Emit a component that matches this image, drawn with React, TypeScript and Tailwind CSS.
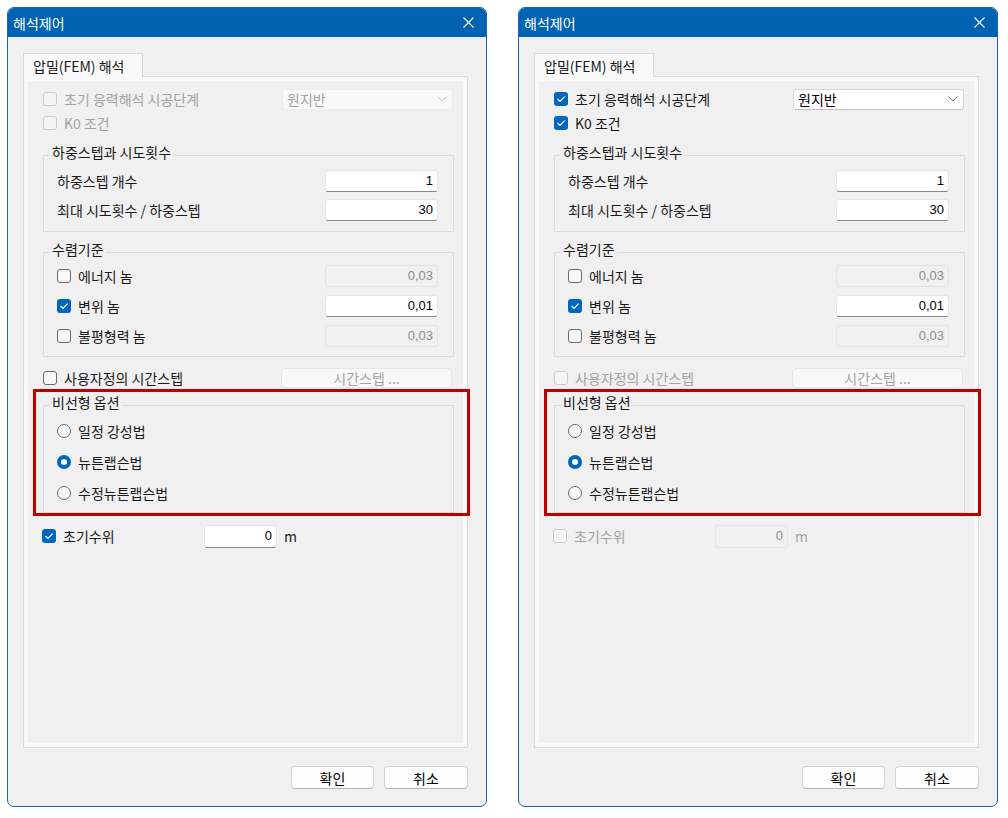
import React from "react";

type Side = "left" | "right";

const FONT = "font-['Noto_Sans_CJK_KR','Noto_Sans',sans-serif]";
const NUM = "font-['Liberation_Sans','Noto_Sans',sans-serif]";

export default function App() {
  return (
    <div className={`min-h-screen bg-white flex gap-[31px] pl-[7px] pt-[7px] ${FONT} text-[14px] text-[#1a1a1a]`}>
      <AnalysisDialog side="left" />
      <AnalysisDialog side="right" />
    </div>
  );
}

function AnalysisDialog({ side }: { side: Side }) {
  const right = side === "right";

  return (
    <div className="w-[480px] h-[800px] flex flex-col rounded-[7px] border border-[#1b63b4] bg-[#f0f0f0] overflow-hidden">
      {/* title bar */}
      <div className="h-[29px] shrink-0 bg-[#0063b1] flex items-center justify-between pl-[5px] pr-[12px] text-white">
        <span className="leading-[20px]">해석제어</span>
        <svg width="11" height="11" viewBox="0 0 11 11" className="block">
          <path d="M0.5 0.5 L10.5 10.5 M10.5 0.5 L0.5 10.5" stroke="#ffffff" strokeWidth="1.1" fill="none" />
        </svg>
      </div>

      <div className="flex-1 flex flex-col pt-[16px] pl-[15px] pr-[18px]">
        {/* tab */}
        <div className="relative z-10 -mb-px self-start h-[24px] w-[120px] border border-b-0 border-[#d9d9d9] bg-[#f9f9f9] pl-[9px] flex items-center">
          <span className="leading-[20px]">압밀(FEM) 해석</span>
        </div>

        {/* tab panel */}
        <div className="h-[672px] border border-[#d9d9d9] bg-[#f9f9f9] p-[4px]">
          <div className="h-full bg-[#f0f0f0] pl-[15px] pr-[9px] pt-[6px] flex flex-col">
            <div className="flex h-[24px] items-center justify-between">
              <CheckLabel checked={right} disabled={!right} label="초기 응력해석 시공단계" />
              <ComboBox value="원지반" disabled={!right} />
            </div>
            <div className="flex h-[24px] items-center">
              <CheckLabel checked={right} disabled={!right} label="K0 조건" />
            </div>

            <GroupBox label="하중스텝과 시도횟수" className="mt-[7px]">
              <div className="flex flex-col gap-[3px] pl-[13px] pr-[15px] pb-[8px]">
                <div className="flex h-[26px] items-center justify-between">
                  <span className="leading-[20px]">하중스텝 개수</span>
                  <TextBox value="1" />
                </div>
                <div className="flex h-[26px] items-center justify-between">
                  <span className="leading-[20px]">최대 시도횟수 / 하중스텝</span>
                  <TextBox value="30" />
                </div>
              </div>
            </GroupBox>

            <GroupBox label="수렴기준" className="mt-[7px]">
              <div className="flex flex-col gap-[8px] pl-[13px] pr-[15px] pb-[9px]">
                <div className="flex h-[22px] items-center justify-between">
                  <CheckLabel label="에너지 놈" />
                  <TextBox value="0,03" disabled />
                </div>
                <div className="flex h-[22px] items-center justify-between">
                  <CheckLabel checked label="변위 놈" />
                  <TextBox value="0,01" />
                </div>
                <div className="flex h-[22px] items-center justify-between">
                  <CheckLabel label="불평형력 놈" />
                  <TextBox value="0,03" disabled />
                </div>
              </div>
            </GroupBox>

            <div className="mt-[10px] flex h-[22px] items-center justify-between">
              <CheckLabel disabled={right} label="사용자정의 시간스텝" />
              <button className="h-[20px] w-[171px] mr-[2px] rounded-[4px] border border-[#e6e6e6] bg-[#f8f8f8] text-[#a3a3a3] leading-[18px]">
                시간스텝 ...
              </button>
            </div>

            {/* highlighted group */}
            <div className="relative mt-[3px]">
              <GroupBox label="비선형 옵션">
                <div className="flex flex-col gap-[9px] pl-[13px] pt-[2px] pb-[8px]">
                  <RadioLabel label="일정 강성법" />
                  <RadioLabel checked label="뉴튼랩슨법" />
                  <RadioLabel label="수정뉴튼랩슨법" />
                </div>
              </GroupBox>
              <div className="pointer-events-none absolute -left-[10px] -top-[3px] -right-[16px] -bottom-[3px] border-[3px] border-[#c00000]" />
            </div>

            <div className="mt-[11px] flex h-[24px] items-center">
              <div className="w-[162px] -ml-px">
                <CheckLabel checked={!right} disabled={right} label="초기수위" />
              </div>
              <TextBox value="0" disabled={right} width="w-[73px]" height="h-[23px]" />
              <span className={`ml-[7px] leading-[20px] ${right ? "text-[#a3a3a3]" : ""}`}>m</span>
            </div>
          </div>
        </div>

        <div className="mt-[18px] flex justify-end gap-[10px]">
          <DialogButton label="확인" width="w-[83px]" />
          <DialogButton label="취소" width="w-[84px]" />
        </div>
      </div>
    </div>
  );
}

function GroupBox({ label, className = "", children }: { label: string; className?: string; children: React.ReactNode }) {
  return (
    <fieldset className={`border border-[#dcdcdc] ${className}`}>
      <legend className="ml-[6px] px-[2px] pb-[6px] leading-[20px]">{label}</legend>
      {children}
    </fieldset>
  );
}

function CheckLabel({ label, checked = false, disabled = false }: { label: string; checked?: boolean; disabled?: boolean }) {
  return (
    <div className="flex items-center gap-[7px]">
      <CheckBox checked={checked} disabled={disabled} />
      <span className={`leading-[20px] ${disabled ? "text-[#a3a3a3]" : ""}`}>{label}</span>
    </div>
  );
}

function CheckBox({ checked, disabled }: { checked: boolean; disabled: boolean }) {
  if (checked && !disabled) {
    return (
      <span className="w-[14px] h-[14px] rounded-[3px] bg-[#0067c0] flex items-center justify-center">
        <svg width="14" height="14" viewBox="0 0 14 14">
          <path d="M3.8 7.3 L6 9.4 L10.3 4.9" stroke="#ffffff" strokeWidth="1.2" fill="none" strokeLinecap="round" strokeLinejoin="round" />
        </svg>
      </span>
    );
  }
  return (
    <span
      className={`w-[14px] h-[14px] rounded-[3px] border ${
        disabled ? "border-[#cbcbcb] bg-[#f5f5f5]" : "border-[#6b6b6b] bg-[#f7f7f7]"
      }`}
    />
  );
}

function RadioLabel({ label, checked = false }: { label: string; checked?: boolean }) {
  return (
    <div className="flex h-[22px] items-center gap-[7px]">
      {checked ? (
        <span className="w-[14px] h-[14px] rounded-full bg-[#0067c0] flex items-center justify-center">
          <span className="w-[6px] h-[6px] rounded-full bg-white" />
        </span>
      ) : (
        <span className="w-[14px] h-[14px] rounded-full border border-[#6b6b6b] bg-[#f7f7f7]" />
      )}
      <span className="leading-[20px]">{label}</span>
    </div>
  );
}

function TextBox({
  value,
  disabled = false,
  width = "w-[113px]",
  height = "h-[22px]",
}: {
  value: string;
  disabled?: boolean;
  width?: string;
  height?: string;
}) {
  return (
    <div
      className={`${width} ${height} rounded-[3px] border flex items-center justify-end pr-[4px] ${NUM} text-[13px] ${
        disabled
          ? "border-[#e4e4e4] bg-[#f0f0f0] text-[#8e8e8e]"
          : "border-[#e6e6e6] border-b-[#8a8a8a] bg-white text-black"
      }`}
    >
      {value}
    </div>
  );
}

function ComboBox({ value, disabled }: { value: string; disabled: boolean }) {
  return (
    <div
      className={`h-[21px] w-[171px] mr-[1px] rounded-[3px] border flex items-center justify-between pl-[4px] pr-[5px] ${
        disabled ? "border-[#ececec] bg-[#f9f9f9] text-[#a3a3a3]" : "border-[#d6d6d6] border-b-[#c2c2c2] bg-white text-black"
      }`}
    >
      <span className="leading-[20px]">{value}</span>
      <svg width="10" height="6" viewBox="0 0 10 6">
        <path d="M0.5 0.5 L5 5 L9.5 0.5" stroke={disabled ? "#c4c4c4" : "#7a7a7a"} strokeWidth="1" fill="none" />
      </svg>
    </div>
  );
}

function DialogButton({ label, width }: { label: string; width: string }) {
  return (
    <button className={`${width} h-[23px] rounded-[4px] border border-[#d3d3d3] border-b-[#b5b5b5] bg-[#fdfdfd] leading-[20px] text-black`}>
      {label}
    </button>
  );
}
